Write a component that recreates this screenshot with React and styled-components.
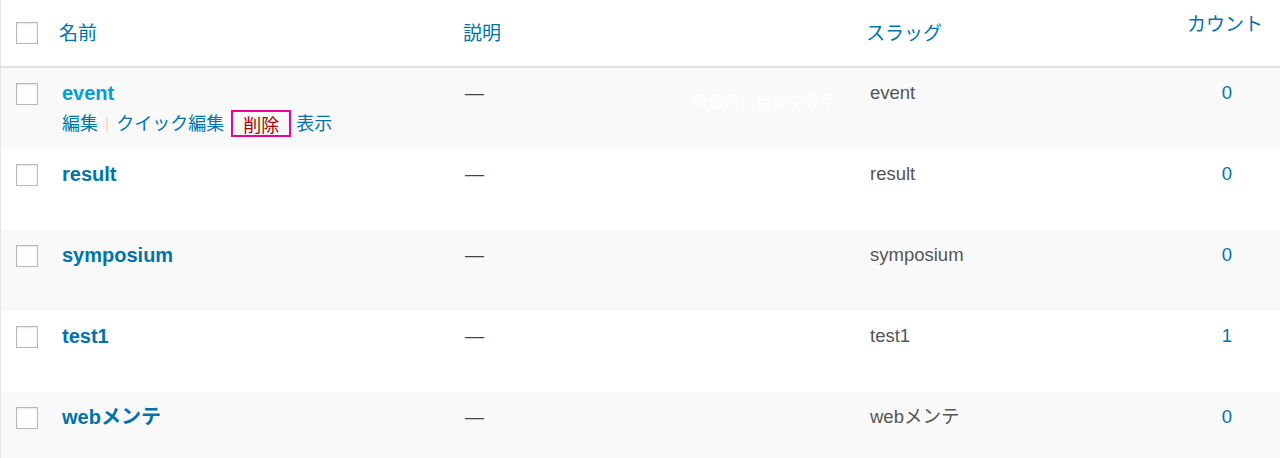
import React from 'react';
import styled, { createGlobalStyle } from 'styled-components';

const Colors = {
  link: '#0073aa',
  linkHover: '#00a0d2',
  text: '#555',
  dash: '#444',
  border: '#e1e1e1',
  stripe: '#f9f9f9',
  delete: '#a00',
  highlight: '#ee0099',
};

const terms = [
  { name: 'event', slug: 'event', count: 0, hover: true },
  { name: 'result', slug: 'result', count: 0 },
  { name: 'symposium', slug: 'symposium', count: 0 },
  { name: 'test1', slug: 'test1', count: 1 },
  { name: 'webメンテ', slug: 'webメンテ', count: 0 },
];

const GlobalStyle = createGlobalStyle`
  html, body {
    margin: 0;
    padding: 0;
    background: #fff;
  }
  body {
    font-family: "Liberation Sans", "Noto Sans CJK JP", sans-serif;
    overflow: hidden;
  }
`;

class App extends React.Component {
  render() {
    return (
      <>
        <GlobalStyle />
        <Table>
          <HeaderRow>
            <CheckCell><Checkbox /></CheckCell>
            <HeadCell>名前</HeadCell>
            <HeadCell>説明</HeadCell>
            <HeadCell>スラッグ</HeadCell>
            <CountHead>カウント</CountHead>
          </HeaderRow>
          {terms.map((term, i) => (
            <Row key={term.name} striped={i % 2 === 0}>
              <CheckCell row><Checkbox /></CheckCell>
              <NameCell>
                <RowTitle hover={term.hover}>{term.name}</RowTitle>
                {term.hover && (
                  <RowActions>
                    <ActionLink>編集</ActionLink>
                    <Separator>|</Separator>
                    <ActionLink>クイック編集</ActionLink>
                    <DeleteBox>削除</DeleteBox>
                    <ActionLink>表示</ActionLink>
                  </RowActions>
                )}
              </NameCell>
              <DescCell>—</DescCell>
              <SlugCell>{term.slug}</SlugCell>
              <CountCell>{term.count}</CountCell>
              {term.hover && <GhostText>新着時に自動で表示</GhostText>}
            </Row>
          ))}
        </Table>
      </>
    );
  }
}

const Table = styled.div`
  width: 100%;
  border-left: 1px solid #e5e5e5;
  box-sizing: border-box;
`;

const columns = '58px 404px 403px 1fr 100px';

const HeaderRow = styled.div`
  display: grid;
  grid-template-columns: ${columns};
  height: 66px;
  border-bottom: 2px solid ${Colors.border};
  align-items: center;
`;

const Row = styled.div`
  position: relative;
  display: grid;
  grid-template-columns: ${columns};
  height: 81px;
  align-items: start;
  background: ${(p) => (p.striped ? Colors.stripe : '#fff')};
`;

const CheckCell = styled.div`
  padding-left: 15px;
  padding-top: ${(p) => (p.row ? '15px' : '0')};
  align-self: ${(p) => (p.row ? 'start' : 'center')};
  display: flex;
`;

const Checkbox = styled.span`
  display: block;
  width: 22px;
  height: 22px;
  box-sizing: border-box;
  border: 1px solid #b4b9be;
  background: #fff;
  box-shadow: inset 0 1px 2px rgba(0, 0, 0, 0.1);
`;

const HeadCell = styled.div`
  color: ${Colors.link};
  font-size: 19px;
  line-height: 26px;
  padding-top: 2px;
`;

const CountHead = styled.div`
  color: ${Colors.link};
  font-size: 19px;
  line-height: 26px;
  align-self: start;
  padding-top: 12px;
  text-align: center;
  padding-right: 10px;
`;

const NameCell = styled.div`
  padding-top: 12px;
  padding-left: 3px;
`;

const RowTitle = styled.a`
  display: block;
  color: ${(p) => (p.hover ? Colors.linkHover : Colors.link)};
  font-size: 20px;
  font-weight: bold;
  line-height: 26px;
`;

const RowActions = styled.div`
  display: flex;
  align-items: center;
  height: 27px;
  margin-top: 4px;
  font-size: 18px;
  color: ${Colors.link};
`;

const ActionLink = styled.a`
  color: ${Colors.link};
  line-height: 26px;
`;

const Separator = styled.span`
  color: #ddd;
  margin: 0 7px;
  font-size: 16px;
`;

const DeleteBox = styled.span`
  display: flex;
  align-items: center;
  height: 27px;
  box-sizing: border-box;
  border: 2px solid ${Colors.highlight};
  color: ${Colors.delete};
  padding: 0 10px;
  margin: 0 5px 0 7px;
`;

const DescCell = styled.div`
  padding-top: 12px;
  padding-left: 2px;
  color: ${Colors.dash};
  font-size: 19px;
  line-height: 26px;
`;

const SlugCell = styled.div`
  padding-top: 12px;
  padding-left: 4px;
  color: ${Colors.text};
  font-size: 18.5px;
  line-height: 26px;
`;

const CountCell = styled.div`
  padding-top: 12px;
  padding-right: 6px;
  text-align: center;
  color: ${Colors.link};
  font-size: 18.5px;
  line-height: 26px;
`;

const GhostText = styled.span`
  position: absolute;
  left: 691px;
  top: 24px;
  font-size: 16px;
  line-height: 20px;
  color: #fff;
  white-space: nowrap;
`;

export default App;
